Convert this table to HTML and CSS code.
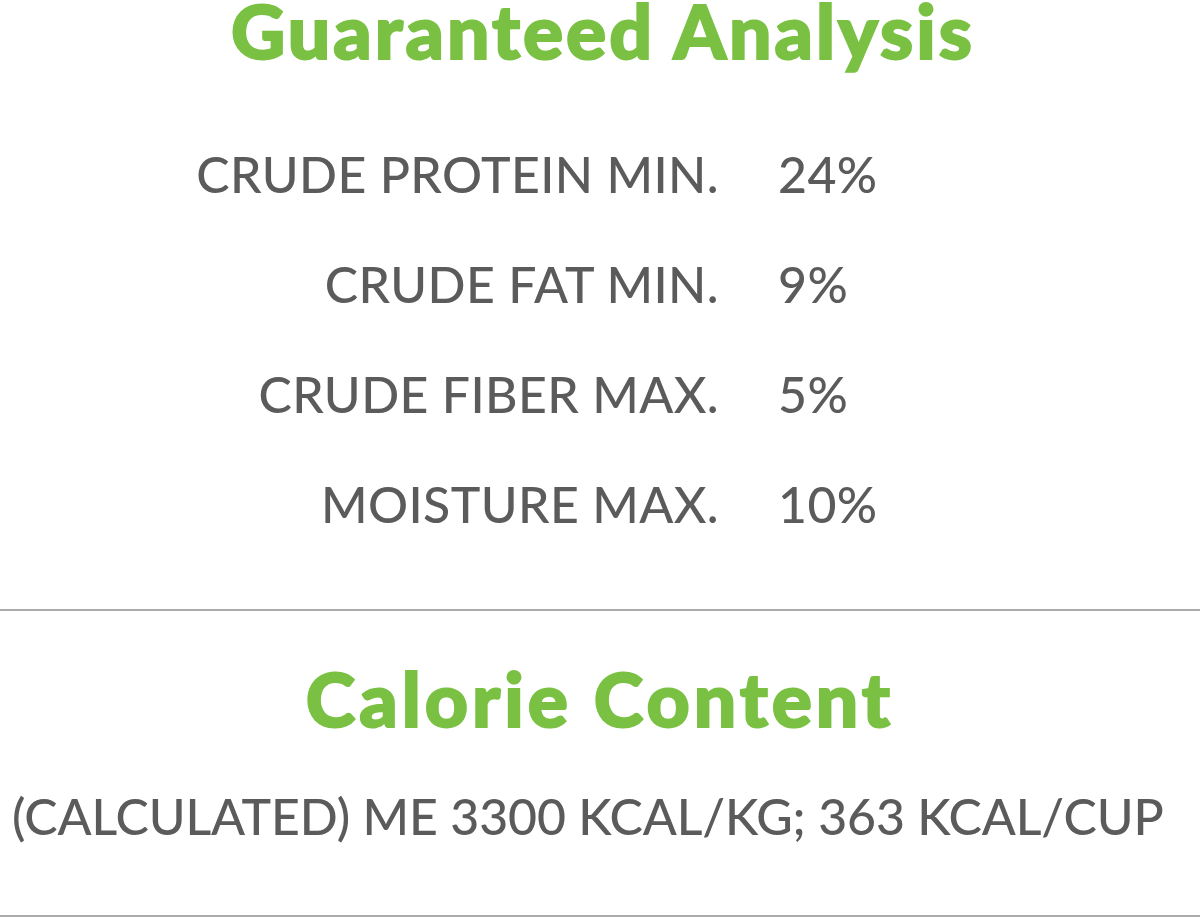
FILE: index.html
```html
<!DOCTYPE html>
<html lang="en">
<head>
<meta charset="utf-8">
<title>Guaranteed Analysis</title>
<link rel="stylesheet" href="styles.css">
</head>
<body>
<main class="panel">
  <section class="analysis">
    <h1 class="heading heading-ga">Guaranteed Analysis</h1>
    <dl class="rows">
      <div class="row"><dt>CRUDE PROTEIN MIN.</dt><dd>24%</dd></div>
      <div class="row"><dt>CRUDE FAT MIN.</dt><dd>9%</dd></div>
      <div class="row"><dt>CRUDE FIBER MAX.</dt><dd>5%</dd></div>
      <div class="row"><dt>MOISTURE MAX.</dt><dd>10%</dd></div>
    </dl>
  </section>
  <section class="calorie">
    <h2 class="heading heading-cal">Calorie Content</h2>
    <p class="cal-text">(CALCULATED) ME 3300 KCAL/KG; 363 KCAL/CUP</p>
  </section>
</main>
</body>
</html>
```
FILE: styles.css
```css
html, body {
  margin: 0;
  padding: 0;
  background: #ffffff;
}
.panel {
  width: 1200px;
  height: 917px;
  font-family: Lato, "Liberation Sans", sans-serif;
  color: #5b5b5b;
  overflow: hidden;
}
.analysis {
  height: 611px;
  border-bottom: 2px solid #ababab;
  box-sizing: border-box;
  display: flex;
  flex-direction: column;
}
.heading {
  margin: 0;
  text-align: center;
  color: #7ac143;
  font-weight: 900;
  font-size: 75px;
  line-height: 56px;
  -webkit-text-stroke: 2px #7ac143;
}
.heading-ga {
  letter-spacing: 3px;
  padding-left: 6px;
  padding-top: 2px;
}
.rows {
  margin: 0;
  padding-top: 88px;
  display: flex;
  flex-direction: column;
}
.row {
  display: grid;
  grid-template-columns: 719px 1fr;
  column-gap: 59px;
  height: 110px;
  align-items: start;
}
.row dt, .row dd {
  margin: 0;
  font-size: 50px;
  font-weight: 500;
  line-height: 56px;
  letter-spacing: 0.4px;
}
.row dt {
  text-align: right;
}
.calorie {
  height: 306px;
  box-sizing: border-box;
  border-bottom: 2px solid #ababab;
  padding-top: 59px;
}
.heading-cal {
  letter-spacing: 4px;
}
.cal-text {
  margin: 62px 0 0 12px;
  font-size: 50px;
  font-weight: 500;
  line-height: 56px;
  letter-spacing: -0.12px;
}
```
